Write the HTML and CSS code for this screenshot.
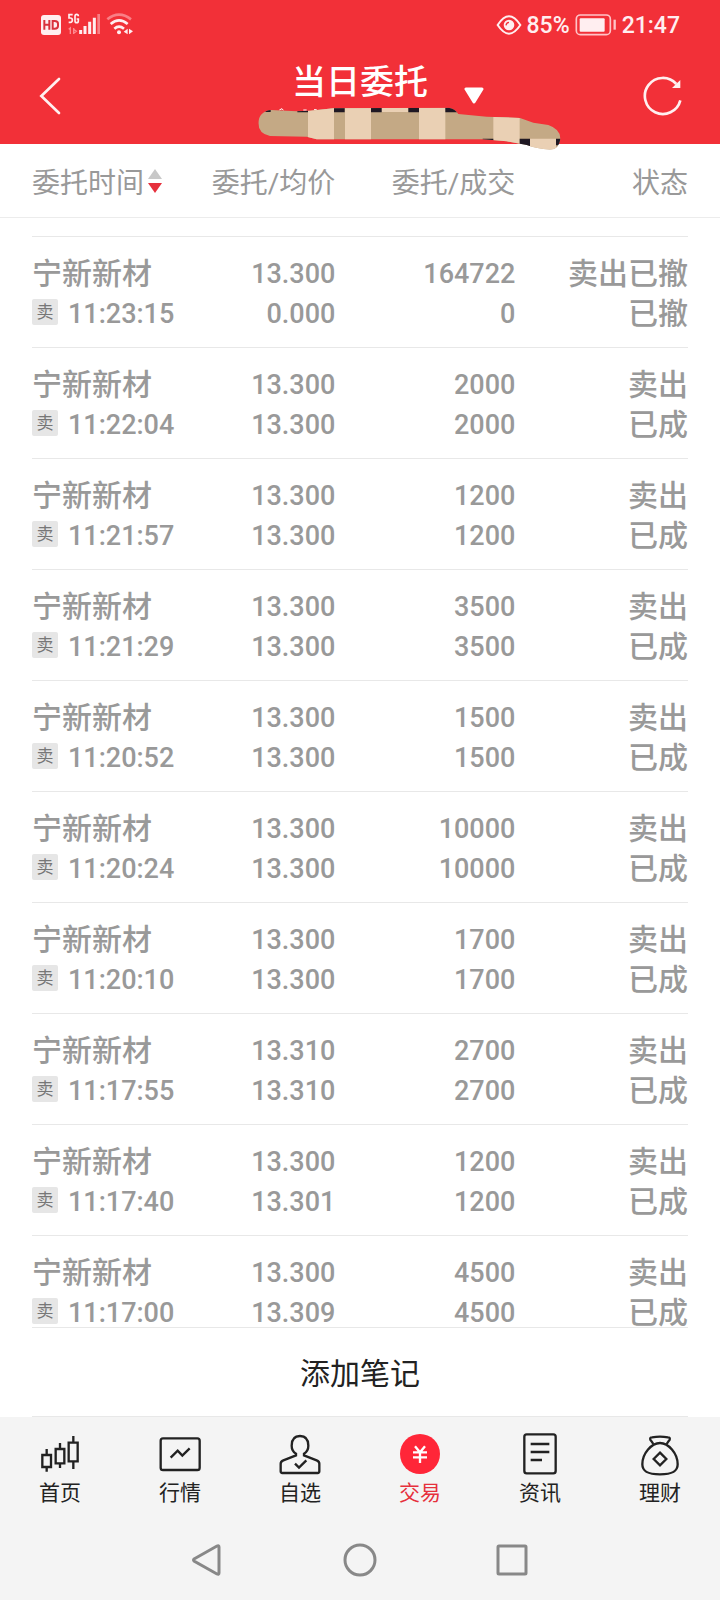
FILE: index.html
```
<!DOCTYPE html>
<html lang="zh-CN">
<head>
    <meta charset="UTF-8">
    <meta name="viewport" content="width=device-width, initial-scale=1.0">
    <title>当日委托</title>
    <link rel="stylesheet" href="styles.css">
</head>
<body>
<div class="app">
    <!-- Status bar -->
    <div class="status-bar">
        <div class="status-group">
            <svg class="status-left" width="100" height="28" viewBox="114 33 300 84">
                <rect x="123" y="45" width="60" height="60" rx="9" fill="#ffeef0"/>
                <path d="M133 60v29M148 60v29M133 74h15M158 63v23h6q10 0 10-8v-7q0-8-10-8z" fill="none" stroke="#d9323c" stroke-width="6"/>
                <path d="M218 44h-11v10h4q6 0 6 6q0 7-6 7h-5M235 49q0-6-5-6t-5 6v13q0 6 5 6t5-6v-5h-5" fill="none" stroke="#ffeef0" stroke-width="5"/>
                <path d="M206 88l5-4v18M221 84v18M221 100l8-6l-8-6" fill="none" stroke="#ff8a90" stroke-width="4"/>
                <path d="M242 90v12M255 78v24M269 65v37M283 53v49" stroke="#ffeef0" stroke-width="9"/>
                <path d="M296 42v60" stroke="#f97f86" stroke-width="8"/>
                <path d="M322 58q35-28 71 0" fill="none" stroke="#f97f86" stroke-width="8"/>
                <path d="M332 72q25-22 51 0M343 86q14-12 29 0" fill="none" stroke="#ffeef0" stroke-width="8"/>
                <circle cx="357" cy="97" r="6" fill="#ffeef0"/>
                <path d="M371 95l12-9v17zM387 86l12 8l-12 9z" fill="#ffeef0"/>
            </svg>
        </div>
        <div class="status-group">
            <svg width="26" height="22" viewBox="46 39 78 66">
                <path d="M51 72Q85 20 119 72Q85 124 51 72z" fill="none" stroke="#ffeef0" stroke-width="6"/>
                <circle cx="85" cy="72" r="16" fill="#ffeef0"/>
                <path d="M76 73q1-8 9-9" fill="none" stroke="#f23038" stroke-width="4"/>
            </svg>
            <span>85%</span>
            <svg width="42" height="24" viewBox="282 38 126 72">
                <rect x="286" y="44" width="102" height="59" rx="12" fill="none" stroke="#ffc4c8" stroke-width="5"/>
                <rect x="296" y="54" width="75" height="40" rx="3" fill="#ffeef0"/>
                <path d="M401 58v30" stroke="#ffc4c8" stroke-width="7"/>
            </svg>
            <span>21:47</span>
        </div>
    </div>

    <!-- Header -->
    <header class="header">
        <button class="icon-button back" aria-label="返回">
            <svg width="36" height="44" viewBox="96 222 108 132">
                <path d="M177 237L124 288L177 339" fill="none" stroke="#fff0f0" stroke-width="8" stroke-linecap="round"/>
            </svg>
        </button>
        <div class="title-box">
            <h1 class="title">当日委托</h1>
            <svg class="account-mask" width="308" height="48" viewBox="48 192 924 144">
                <clipPath id="brush">
                    <path d="M55 250Q56 215 92 210L170 214L210 212L280 205L625 203Q645 206 655 222L740 230L840 234L880 248L925 255Q962 268 961 296Q958 328 930 329Q890 326 860 315L800 304L730 298L230 298L200 290L90 288Q56 282 55 250Z"/>
                </clipPath>
                <path d="M118 210l8-4l4 5M190 210h10M222 209h8" stroke="#fff" stroke-width="3" fill="none"/>
                <g clip-path="url(#brush)">
                    <path fill="#c4a985" d="M48 192h924v144H48z"/>
                    <path fill="#ead0b4" d="M204 192h78v144h-78zM315 192h78v144h-78zM537 192h79v144h-79zM760 192h79v144h-79zM870 296h78v40h-78zM425 200h80v16h-80z"/>
                    <path fill="#1f1823" d="M76 200h16v16H76zM172 200h32v17h-32zM282 200h32v17h-32zM393 200h32v17h-32zM505 200h32v17h-32zM616 200h36v17h-36zM728 296h32v8h-32zM839 296h31v26h-31zM948 296h16v20h-16z"/>
                </g>
            </svg>
        </div>
        <div class="header-right">
            <button class="icon-button" aria-label="切换账户">
                <svg width="20" height="18" viewBox="0 0 20 18">
                    <path d="M2 2h16l-8 13z" fill="#fff" stroke="#fff" stroke-width="3" stroke-linejoin="round"/>
                </svg>
            </button>
            <button class="icon-button" aria-label="刷新">
                <svg width="42" height="42" viewBox="489 225 126 126">
                    <path d="M604 301A54 54 0 1 1 592 252" fill="none" stroke="#fff0f0" stroke-width="8"/>
                    <path d="M604 240v24h-25z" fill="#fff0f0"/>
                </svg>
            </button>
        </div>
    </header>

    <!-- Orders -->
    <main class="orders">
        <table class="order-table">
            <thead>
                <tr>
                    <th class="col-time">
                        <button class="sort">委托时间<svg width="14" height="24" viewBox="0 0 14 24"><path d="M7 0l7 10H0z" fill="#c8c8c8"/><path d="M0 14h14l-7 10z" fill="#e6303c"/></svg></button>
                    </th>
                    <th class="col-price">委托/均价</th>
                    <th class="col-amount">委托/成交</th>
                    <th class="col-state">状态</th>
                </tr>
            </thead>
            <tbody>
                <tr>
                    <td><div class="cell"><span class="name">宁新新材</span><span class="time"><i class="tag">卖</i>11:23:15</span></div></td>
                    <td><div class="cell num"><span>13.300</span><span>0.000</span></div></td>
                    <td><div class="cell num"><span>164722</span><span>0</span></div></td>
                    <td><div class="cell state"><span>卖出已撤</span><span>已撤</span></div></td>
                </tr>
                <tr>
                    <td><div class="cell"><span class="name">宁新新材</span><span class="time"><i class="tag">卖</i>11:22:04</span></div></td>
                    <td><div class="cell num"><span>13.300</span><span>13.300</span></div></td>
                    <td><div class="cell num"><span>2000</span><span>2000</span></div></td>
                    <td><div class="cell state"><span>卖出</span><span>已成</span></div></td>
                </tr>
                <tr>
                    <td><div class="cell"><span class="name">宁新新材</span><span class="time"><i class="tag">卖</i>11:21:57</span></div></td>
                    <td><div class="cell num"><span>13.300</span><span>13.300</span></div></td>
                    <td><div class="cell num"><span>1200</span><span>1200</span></div></td>
                    <td><div class="cell state"><span>卖出</span><span>已成</span></div></td>
                </tr>
                <tr>
                    <td><div class="cell"><span class="name">宁新新材</span><span class="time"><i class="tag">卖</i>11:21:29</span></div></td>
                    <td><div class="cell num"><span>13.300</span><span>13.300</span></div></td>
                    <td><div class="cell num"><span>3500</span><span>3500</span></div></td>
                    <td><div class="cell state"><span>卖出</span><span>已成</span></div></td>
                </tr>
                <tr>
                    <td><div class="cell"><span class="name">宁新新材</span><span class="time"><i class="tag">卖</i>11:20:52</span></div></td>
                    <td><div class="cell num"><span>13.300</span><span>13.300</span></div></td>
                    <td><div class="cell num"><span>1500</span><span>1500</span></div></td>
                    <td><div class="cell state"><span>卖出</span><span>已成</span></div></td>
                </tr>
                <tr>
                    <td><div class="cell"><span class="name">宁新新材</span><span class="time"><i class="tag">卖</i>11:20:24</span></div></td>
                    <td><div class="cell num"><span>13.300</span><span>13.300</span></div></td>
                    <td><div class="cell num"><span>10000</span><span>10000</span></div></td>
                    <td><div class="cell state"><span>卖出</span><span>已成</span></div></td>
                </tr>
                <tr>
                    <td><div class="cell"><span class="name">宁新新材</span><span class="time"><i class="tag">卖</i>11:20:10</span></div></td>
                    <td><div class="cell num"><span>13.300</span><span>13.300</span></div></td>
                    <td><div class="cell num"><span>1700</span><span>1700</span></div></td>
                    <td><div class="cell state"><span>卖出</span><span>已成</span></div></td>
                </tr>
                <tr>
                    <td><div class="cell"><span class="name">宁新新材</span><span class="time"><i class="tag">卖</i>11:17:55</span></div></td>
                    <td><div class="cell num"><span>13.310</span><span>13.310</span></div></td>
                    <td><div class="cell num"><span>2700</span><span>2700</span></div></td>
                    <td><div class="cell state"><span>卖出</span><span>已成</span></div></td>
                </tr>
                <tr>
                    <td><div class="cell"><span class="name">宁新新材</span><span class="time"><i class="tag">卖</i>11:17:40</span></div></td>
                    <td><div class="cell num"><span>13.300</span><span>13.301</span></div></td>
                    <td><div class="cell num"><span>1200</span><span>1200</span></div></td>
                    <td><div class="cell state"><span>卖出</span><span>已成</span></div></td>
                </tr>
                <tr>
                    <td><div class="cell"><span class="name">宁新新材</span><span class="time"><i class="tag">卖</i>11:17:00</span></div></td>
                    <td><div class="cell num"><span>13.300</span><span>13.309</span></div></td>
                    <td><div class="cell num"><span>4500</span><span>4500</span></div></td>
                    <td><div class="cell state"><span>卖出</span><span>已成</span></div></td>
                </tr>
            </tbody>
        </table>
    </main>

    <div class="note-bar">
        <button class="note-button">添加笔记</button>
    </div>

    <!-- Tabs -->
    <nav class="tabs">
        <a class="tab" href="#home">
            <svg class="tab-icon" viewBox="114 96 132 132">
                <path d="M127 165h26v36h-26zM140 147v18M140 201v14M167 147h26v43h-26zM180 129v18M180 190v14M206 128h27v56h-27zM220 108v20M220 184v23"/>
            </svg>
            <span>首页</span>
        </a>
        <a class="tab" href="#market">
            <svg class="tab-icon" viewBox="474 96 132 132">
                <rect x="482" y="115" width="117" height="95" rx="7"/>
                <path d="M512 173l21-21l14 15l22-22"/>
            </svg>
            <span>行情</span>
        </a>
        <a class="tab" href="#watchlist">
            <svg class="tab-icon" viewBox="834 96 132 132">
                <path d="M888 161Q875 153 875 137Q875 108 900 108T925 137Q925 153 912 161V166L950 181Q958 184 958 191V214Q958 219 953 219H847Q842 219 842 214V191Q842 184 850 181L888 166Z"/>
                <path d="M885 191l12 12l22-22"/>
            </svg>
            <span>自选</span>
        </a>
        <a class="tab active" href="#trade">
            <svg class="tab-icon" viewBox="114 96 132 132">
                <circle class="coin" cx="180" cy="162" r="60"/>
                <path class="yuan" d="M165 139l15 18l15-18M159 157h42M159 172h42M180 157v32"/>
            </svg>
            <span>交易</span>
        </a>
        <a class="tab" href="#news">
            <svg class="tab-icon" viewBox="474 96 132 132">
                <rect x="493" y="103" width="94" height="117" rx="7"/>
                <path d="M512 132h56M512 156h56M512 180h34"/>
            </svg>
            <span>资讯</span>
        </a>
        <a class="tab" href="#wealth">
            <svg class="tab-icon" viewBox="834 96 132 132">
                <path d="M880 132Q875 124 871 119Q869 112 876 112Q900 108 924 112Q931 112 929 119Q925 124 920 132"/>
                <path d="M900 129C875 129 847 160 847 193C847 214 862 223 900 223S953 214 953 193C953 160 925 129 900 129Z"/>
                <path d="M900 158l19 19l-19 19l-19-19z"/>
            </svg>
            <span>理财</span>
        </a>
    </nav>

    <!-- System keys -->
    <div class="system-bar">
        <button class="icon-button" aria-label="后退"><svg width="36" height="36" viewBox="0 0 36 36"><path class="key" d="M4 17L27 4Q29 3 29 5V31Q29 33 27 32L4 19Q3 18 4 17Z"/></svg></button>
        <button class="icon-button" aria-label="主屏幕"><svg width="36" height="36" viewBox="0 0 36 36"><circle class="key" cx="18" cy="18" r="15"/></svg></button>
        <button class="icon-button" aria-label="最近任务"><svg width="36" height="36" viewBox="0 0 36 36"><rect class="key" x="4" y="4" width="28" height="28" rx="1"/></svg></button>
    </div>
</div>
</body>
</html>
```

FILE: styles.css
```
* {
    box-sizing: border-box;
}
body {
    margin: 0;
    font-family: Roboto, "Noto Sans CJK SC", sans-serif;
    color: #222;
    background-color: #fff;
}
svg {
    display: block;
}
button {
    font: inherit;
    color: inherit;
    background: none;
    border: none;
    padding: 0;
    cursor: pointer;
}
.app {
    display: flex;
    flex-direction: column;
    height: 100vh;
}

/* Status bar */
.status-bar {
    display: flex;
    justify-content: space-between;
    align-items: center;
    height: 48px;
    padding: 2px 40px 0 38px;
    background-color: #f23038;
    color: #ffeef0;
    font-size: 23px;
    font-weight: 500;
}
.status-group {
    display: flex;
    align-items: center;
    gap: 5px;
}

/* Header */
.header {
    display: grid;
    grid-template-columns: 1fr auto 1fr;
    align-items: center;
    height: 96px;
    padding: 0 32px;
    background-color: #f23038;
    color: #fff;
}
.back {
    justify-self: start;
}
.title-box {
    position: relative;
    align-self: start;
    padding-top: 10px;
}
.title {
    margin: 0;
    font-size: 34px;
    line-height: 48px;
    font-weight: 500;
}
.account-mask {
    position: absolute;
    z-index: 1;
    top: 56px;
    left: -36px;
}
.header-right {
    display: flex;
    justify-content: space-between;
    align-items: center;
    padding: 0 4px 0 36px;
}

/* Orders */
.orders {
    flex: 1;
    min-height: 0;
    overflow: hidden;
}
.order-table {
    width: 100%;
    table-layout: fixed;
    border-collapse: collapse;
    color: #999;
    font-size: 27px;
    text-align: right;
}
.order-table th {
    height: 73px;
    padding: 2px 0 0;
    border-bottom: 1px solid #ececec;
    font-size: 28px;
    font-weight: 400;
    text-align: right;
}
.order-table .col-time {
    width: 26%;
    text-align: left;
}
.order-table .col-price {
    width: 21%;
    padding-right: 3px;
}
.order-table .col-amount {
    width: 25%;
    padding-right: 3px;
}
.order-table td {
    padding: 0;
}
.order-table tr > :first-child {
    padding-left: 32px;
    text-align: left;
}
.order-table tr > :last-child {
    padding-right: 32px;
}
.order-table tbody tr:first-child td {
    padding-top: 18px;
}
.sort {
    display: flex;
    align-items: center;
    gap: 4px;
}
.cell {
    display: flex;
    flex-direction: column;
    padding: 17px 0 13px;
    border-top: 1px solid #e8e8e8;
    line-height: 40px;
    font-weight: 500;
    white-space: nowrap;
}
.num {
    padding-right: 3px;
}
.name,
.state {
    font-size: 30px;
    font-weight: 500;
}
.time {
    display: flex;
    align-items: center;
    gap: 10px;
}
.tag {
    width: 26px;
    height: 26px;
    margin-bottom: 4px;
    border-radius: 2px;
    background-color: #e6e6e6;
    color: #777;
    font-size: 17px;
    line-height: 26px;
    font-style: normal;
    font-weight: 400;
    text-align: center;
}

/* Note button */
.note-bar {
    margin: 0 32px;
    border-top: 1px solid #e8e8e8;
    border-bottom: 1px solid #e8e8e8;
}
.note-button {
    display: block;
    width: 100%;
    height: 88px;
    padding-bottom: 2px;
    font-size: 30px;
}

/* Tabs */
.tabs {
    display: grid;
    grid-template-columns: repeat(6, 1fr);
    padding: 15px 0 10px;
    background-color: #f4f4f4;
}
.tab {
    display: flex;
    flex-direction: column;
    align-items: center;
    color: #222;
    font-size: 21px;
    line-height: 34px;
    text-decoration: none;
}
.tab-icon {
    width: 44px;
    height: 44px;
    fill: none;
    stroke: #222;
    stroke-width: 7;
}
.tab.active {
    color: #e6303c;
}
.tab-icon .coin {
    fill: #ff2638;
    stroke: none;
}
.tab-icon .yuan {
    stroke: #fff;
}

/* System keys */
.system-bar {
    display: flex;
    justify-content: center;
    align-items: center;
    gap: 116px;
    height: 80px;
    background-color: #f4f4f4;
}
.key {
    fill: none;
    stroke: #888;
    stroke-width: 3;
}
```
